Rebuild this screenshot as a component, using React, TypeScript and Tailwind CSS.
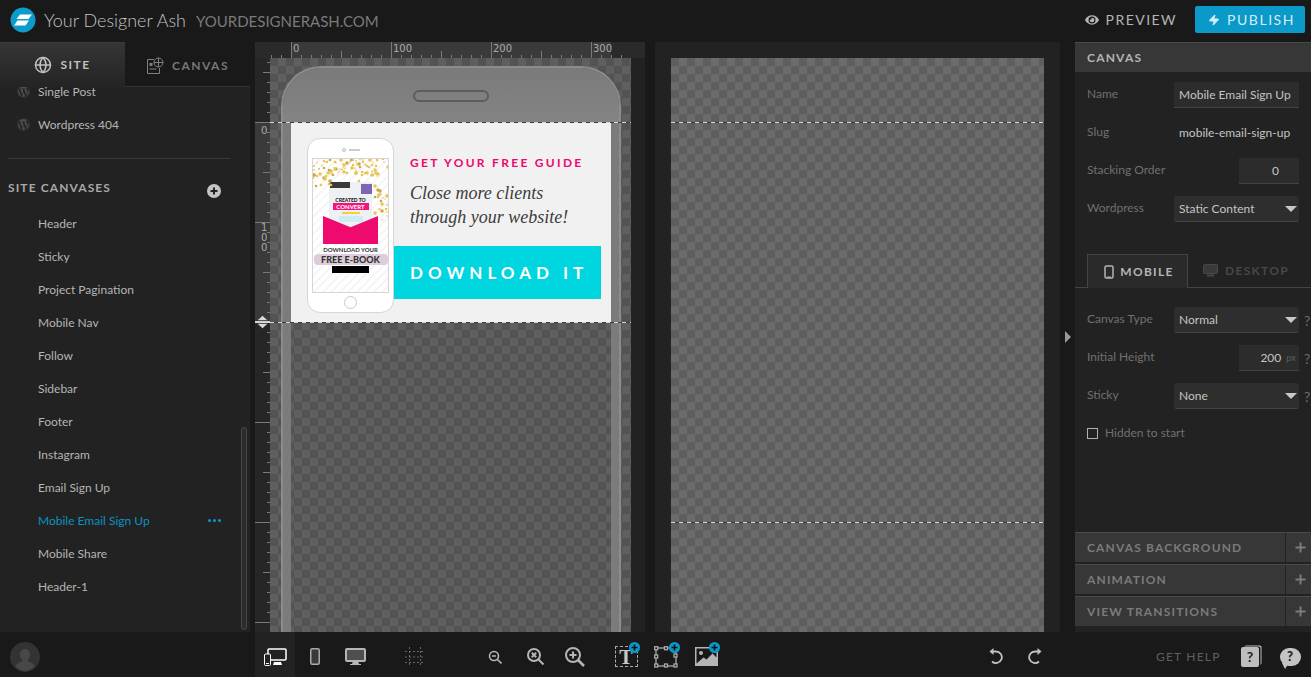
import React from "react";
import { FaWordpress, FaEye } from "react-icons/fa";
import { Globe, Zap } from "lucide-react";

const canvases = ["Header","Sticky","Project Pagination","Mobile Nav","Follow","Sidebar","Footer","Instagram","Email Sign Up","Mobile Email Sign Up","Mobile Share","Header-1"];

const Dashed = ({ className = "" }: { className?: string }) => (
  <div className={"absolute left-0 right-0 h-px bg-[repeating-linear-gradient(90deg,#d8d8d8_0_4px,#3a3a3a_4px_8px)] " + className} />
);

function TopRulerTicks() {
  const t: React.ReactNode[] = [];
  for (let x = 16; x <= 376; x += 10) {
    const v = x - 36;
    const major = v % 100 === 0;
    const mid = v % 50 === 0;
    t.push(<line key={x} x1={x + 0.5} x2={x + 0.5} y1={major ? 0 : mid ? 9 : 13} y2={16} stroke="#7a7a7a" />);
  }
  return <svg width="376" height="16" className="block">{t}</svg>;
}

function LeftRulerTicks() {
  const t: React.ReactNode[] = [];
  for (let y = 4; y < 574; y += 10) {
    const v = y - 64;
    const major = v % 100 === 0 && v >= 0;
    const mid = v % 50 === 0;
    t.push(<line key={y} x1={major ? 0 : mid ? 8 : 12} x2={15} y1={y + 0.5} y2={y + 0.5} stroke="#7a7a7a" />);
  }
  return <svg width="15" height="574" className="block">{t}</svg>;
}

function Confetti() {
  const dots: React.ReactNode[] = [];
  let s = 17;
  for (let i = 0; i < 120; i++) {
    s = (s * 137 + 71) % 1009;
    const x = s % 77;
    s = (s * 137 + 71) % 1009;
    const y = x > 60 ? s % 75 : (s % 28) * (i % 3 === 0 ? 0.55 : 1);
    if (x > 18 && x < 62 && y > 22) continue;
    dots.push(<circle key={i} cx={x} cy={y} r={0.8 + (i % 3) * 0.5} fill={i % 4 === 0 ? "#c9a94a" : "#e9c654"} />);
  }
  return <svg width="77" height="135" className="absolute left-0 top-0">{dots}</svg>;
}

function MiniPhone() {
  return (
    <div className="relative z-10 w-[87px] h-[175px] shrink-0 rounded-[13px] border border-[#d6d6d6] bg-white flex flex-col items-center">
      <div className="h-[19px] flex items-center gap-[3px] pt-[3px]">
        <span className="w-[4px] h-[4px] rounded-full border border-[#bbb]" />
        <span className="w-[11px] h-[2px] bg-[#ccc]" />
      </div>
      <div className="relative w-[77px] h-[135px] border border-[#d5d5d5] bg-[repeating-linear-gradient(135deg,#ffffff_0_4px,#f6f6f6_4px_6px)] overflow-hidden flex flex-col items-center">
        <div className="w-[43px] h-[48px] mt-[23px] bg-[#eef1f4] flex flex-col items-center relative">
          <div className="absolute left-[1px] top-0 w-[20px] h-[6px] bg-[#3a3a3a]" />
          <div className="absolute right-0 top-[2px] w-[11px] h-[10px] bg-[#7f66b5]" />
          <span className="mt-[15px] text-[5px] leading-[6px] font-black text-[#222] whitespace-nowrap">CREATED TO</span>
          <span className="w-[36px] h-[7px] bg-[#f4157a] text-white text-[6px] leading-[7px] font-bold text-center">CONVERT</span>
          <span className="w-[18px] h-[2px] mt-[2px] bg-[#f2d13a]" />
          <span className="w-[24px] h-[6px] mt-[2px] bg-[#cfeaf2]" />
        </div>
        <div className="w-[55px] h-[28px] -mt-[14px] bg-[#ee0a6e] [clip-path:polygon(0_0,50%_40%,100%_0,100%_100%,0_100%)]" />
        <span className="mt-[2px] text-[6px] leading-[8px] font-bold text-[#333] whitespace-nowrap">DOWNLOAD YOUR</span>
        <span className="w-[74px] text-center bg-[#ddccd9] rounded-[4px] text-[9px] leading-[11px] font-black text-[#333] whitespace-nowrap">FREE E-BOOK</span>
        <span className="w-[37px] h-[7px] bg-black mt-[1px]" />
        <Confetti />
      </div>
      <span className="w-[13px] h-[13px] mt-[3px] rounded-full border border-[#c8c8c8]" />
    </div>
  );
}

function Promo() {
  return (
    <div className="relative h-[200px] bg-[#f1f1f2] flex pl-[16px] pt-[16px]">
      <MiniPhone />
      <div className="flex-1 flex flex-col pt-[14px]">
        <div className="pl-[16px] pt-[2px] text-[12px] leading-[18px] font-bold tracking-[2.3px] text-[#f0066f] whitespace-nowrap">GET YOUR FREE GUIDE</div>
        <div className="pl-[16px] mt-[9px] font-['Liberation_Serif'] italic text-[18px] leading-[24px] text-[#3d3d3d] whitespace-nowrap">Close more clients<br />through your website!</div>
        <div className="mt-[17px] mr-[10px] h-[53px] bg-[#00d6df] pl-[16px] flex items-center text-white font-bold text-[17px] tracking-[5px] whitespace-nowrap">DOWNLOAD IT</div>
      </div>
    </div>
  );
}

function Field({ label, children, help }: { label: string; children: React.ReactNode; help?: boolean }) {
  return (
    <div className="flex items-center h-[26px] mb-[12px] pl-[12px]">
      <span className="flex-1 text-[12px] text-[#707070] -mt-[2px]">{label}</span>
      {children}
      <span className="w-[12px] pl-[5px] text-[14px] text-[#6d6d6d]">{help ? "?" : ""}</span>
    </div>
  );
}

const Select = ({ value }: { value: string }) => (
  <div className="w-[125px] h-[26px] rounded-[3px] bg-[#2e2e2e] border-b border-[#444] flex items-center justify-between pl-[5px] pr-[2px] text-[12px] text-[#c4c4c4]">
    <span>{value}</span>
    <span className="w-0 h-0 border-x-[6px] border-x-transparent border-t-[6px] border-t-[#c8c8c8]" />
  </div>
);

function Section({ title }: { title: string }) {
  return (
    <div className="h-[30px] mb-[2px] flex bg-[#373737] border-t border-[#4a4a4a]">
      <div className="w-[210px] pl-[12px] flex items-center text-[12px] font-bold tracking-[1.15px] text-[#7b7b7b]">{title}</div>
      <div className="flex-1 border-l border-[#222] flex items-center justify-center pl-[4px]">
        <svg width="11" height="11" viewBox="0 0 11 11"><path d="M5.5 0.5v10M0.5 5.5h10" stroke="#7b7b7b" strokeWidth="2" /></svg>
      </div>
    </div>
  );
}

const Badge = () => (
  <span className="absolute right-[6px] top-[10px] w-[11px] h-[11px] rounded-full bg-[#0a99c9] flex items-center justify-center">
    <svg width="7" height="7" viewBox="0 0 7 7"><path d="M3.5 0.5v6M0.5 3.5h6" stroke="#111" strokeWidth="1.6" /></svg>
  </span>
);

const Btn = ({ className = "", children }: { className?: string; children: React.ReactNode }) => (
  <div className={"relative w-[40px] h-[45px] shrink-0 pt-[4px] flex items-center justify-center " + className}>{children}</div>
);

const Monitor = ({ c = "#b5b5b5" }: { c?: string }) => (
  <svg width="21" height="18" viewBox="0 0 21 18"><rect x="1" y="1" width="19" height="12" rx="1" fill="none" stroke={c} strokeWidth="2" /><rect x="2" y="2" width="17" height="10" fill={c} opacity="0.35" /><path d="M8 13h5l1 3h2v1H5v-1h2z" fill={c} /></svg>
);

export default function App() {
  return (
    <div className="w-[1311px] h-[677px] overflow-hidden bg-[#191919] flex flex-col font-['Lato',sans-serif]">
      <header className="h-[42px] shrink-0 flex items-center">
        <svg width="26" height="26" viewBox="0 0 26 26" className="ml-[10px] -mt-[3px]">
          <circle cx="13" cy="13" r="12.5" fill="#0d9cc9" />
          <path d="M10 7.500h12l-3.500 4.500H6.500zM7.500 13.500h11.500l-3.500 5H4z" fill="#fff" />
        </svg>
        <span className="ml-[8px] text-[18px] font-light text-[#c2c2c2] -mt-[1px] tracking-[-0.02px]">Your Designer Ash</span>
        <span className="ml-[10px] text-[15px] text-[#7a7a7a] tracking-[0px]">YOURDESIGNERASH.COM</span>
        <div className="ml-auto flex items-center text-[#b5b5b5] -mt-[3px]">
          <FaEye size={14} />
          <span className="ml-[7px] text-[14px] tracking-[1.45px]">PREVIEW</span>
        </div>
        <div className="ml-[18px] mr-[6px] -mt-[3px] w-[110px] h-[27px] rounded-[2px] bg-[#0a99c9] flex items-center pl-[13px] text-[#d5eef6]">
          <Zap size={12} fill="currentColor" />
          <span className="ml-[7px] text-[14px] tracking-[1.55px]">PUBLISH</span>
        </div>
      </header>

      <main className="h-[590px] shrink-0 flex">
        <aside className="relative w-[250px] shrink-0 bg-[#222] flex flex-col overflow-hidden">
          <div className="h-[45px] shrink-0 flex">
            <div className="w-[125px] border-t border-[#3c3c3c] bg-[linear-gradient(#353535,#242424)] flex items-center justify-center gap-[8px] text-[#c0c0c0]">
              <Globe size={18} />
              <span className="text-[12px] font-bold tracking-[1.5px]">SITE</span>
            </div>
            <div className="flex-1 bg-[#191919] border-b border-[#333] pt-[4px] flex items-center justify-center gap-[8px] text-[#777]">
              <svg width="18" height="18" viewBox="0 0 18 18" fill="none" stroke="#808080">
                <path d="M8 2.5H1.5v14h12V11" /><circle cx="12.5" cy="5.5" r="4.5" fill="#191919" /><path d="M8 5.5h9M12.5 1v9" /><rect x="3.5" y="6" width="3" height="3" fill="#808080" stroke="none" /><path d="M3.5 12h7" />
              </svg>
              <span className="text-[12px] font-bold tracking-[1.5px]">CANVAS</span>
            </div>
          </div>
          <div className="flex-1 overflow-hidden">
            <div className="-mt-[12px]">
              {["Single Post", "Wordpress 404"].map((n) => (
                <div key={n} className="h-[33px] flex items-center pl-[17px] text-[12px] text-[#b5b5b5]">
                  <FaWordpress size={13} className="text-[#4e4e4e] mr-[8px]" />
                  <span>{n}</span>
                </div>
              ))}
            </div>
            <div className="mx-[8px] w-[222px] mt-[17px] border-t border-[#383838]" />
            <div className="h-[20px] mt-[19px] flex items-center pl-[8px] pr-[29px] justify-between">
              <span className="text-[12px] font-bold tracking-[1.1px] text-[#a8a8a8]">SITE CANVASES</span>
              <span className="w-[14px] h-[14px] mt-[5px] rounded-full bg-[#c4c4c4] flex items-center justify-center">
                <svg width="8" height="8" viewBox="0 0 8 8"><path d="M4 0.5v7M0.5 4h7" stroke="#222" strokeWidth="2" /></svg>
              </span>
            </div>
            <div className="mt-[9px]">
              {canvases.map((n) => {
                const on = n === "Mobile Email Sign Up";
                return (
                  <div key={n} className={"h-[33px] flex items-center pl-[38px] pr-[29px] justify-between text-[12px] " + (on ? "text-[#0a93c2]" : "text-[#b5b5b5]")}>
                    <span>{n}</span>
                    {on && (
                      <span className="flex gap-[2px]">
                        <i className="w-[3px] h-[3px] rounded-full bg-[#0a99c9]" /><i className="w-[3px] h-[3px] rounded-full bg-[#0a99c9]" /><i className="w-[3px] h-[3px] rounded-full bg-[#0a99c9]" />
                      </span>
                    )}
                  </div>
                );
              })}
            </div>
          </div>
          <div className="absolute left-[241px] top-[385px] w-[6px] h-[203px] rounded-[3px] bg-[#2c2c2c] border border-[#484848]" />
        </aside>

        <section className="ml-[5px] w-[390px] shrink-0 bg-[#222] flex flex-col">
          <div className="relative h-[16px] shrink-0 bg-[#2a2a2a] overflow-hidden">
            <div className="absolute left-[36px] w-[320px] h-full bg-[#3a3a3a]" />
            <div className="absolute left-0 top-0"><TopRulerTicks /></div>
            {[["0", 38], ["100", 138], ["200", 238], ["300", 338]].map(([l, x]) => (
              <span key={l as string} className="absolute top-[0px] text-[10px] leading-[13px] text-[#aaa] font-['DejaVu_Sans']" style={{ left: x as number }}>{l}</span>
            ))}
          </div>
          <div className="flex-1 flex overflow-hidden">
            <div className="relative w-[15px] shrink-0 bg-[#262626]">
              <div className="absolute top-[64px] h-[200px] w-full bg-[#3a3a3a]" />
              <div className="absolute left-0 top-0"><LeftRulerTicks /></div>
              <span className="absolute left-[6px] top-[66px] text-[10px] leading-[13px] text-[#aaa] font-['DejaVu_Sans']">0</span>
              <span className="absolute left-[6px] top-[165px] w-[8px] text-[10px] leading-[10px] text-[#aaa] font-['DejaVu_Sans']">1<br />0<br />0</span>
              <svg width="15" height="14" className="absolute left-0 top-[257px]" viewBox="0 0 15 14">
                <path d="M7.5 0.500l5.500 5h-11zM2 8.500h11l-5.500 5z" fill="#d8d8d8" stroke="#222" strokeWidth="0.5" /><path d="M0 7h15" stroke="#fff" strokeWidth="1.500" />
              </svg>
            </div>
            <div className="relative w-[361px] bg-[#5f5f5f] bg-[repeating-conic-gradient(#5f5f5f_0_25%,#535353_0_50%)] bg-[length:16px_16px] overflow-hidden pl-[11px] pt-[8px]">
              <div className="w-[340px] h-[600px] rounded-t-[40px] border-2 border-b-0 border-[#8c8c8c]">
                <div className="h-[54px] rounded-t-[38px] bg-[linear-gradient(#7a7a7a,#848484)] flex justify-center pt-[22px]">
                  <div className="w-[76px] h-[12px] rounded-[6px] border-2 border-[#5c5c5c]" />
                </div>
                <div className="h-[546px] border-x-[8px] border-[#7b7b7b]">
                  <Promo />
                </div>
              </div>
              <Dashed className="top-[64px]" />
              <Dashed className="top-[264px]" />
            </div>
            <div className="flex-1 bg-[#222]" />
          </div>
        </section>

        <section className="ml-[10px] w-[405px] shrink-0 bg-[#222] pl-[16px] pr-[16px] pt-[16px]">
          <div className="relative h-full bg-[#6b6b6b] bg-[repeating-conic-gradient(#6b6b6b_0_25%,#5e5e5e_0_50%)] bg-[length:16px_16px]">
            <Dashed className="top-[64px]" />
            <Dashed className="top-[464px]" />
          </div>
        </section>

        <div className="w-[15px] shrink-0 flex items-center justify-center">
          <span className="w-0 h-0 border-y-[6px] border-y-transparent border-l-[6px] border-l-[#9a9a9a]" />
        </div>

        <aside className="w-[236px] shrink-0 bg-[#222] flex flex-col">
          <div className="h-[30px] shrink-0 bg-[#373737] border-t border-[#4a4a4a] pl-[12px] flex items-center text-[12px] font-bold tracking-[1.2px] text-[#b5b5b5]">CANVAS</div>
          <div className="pt-[10px]">
            <Field label="Name">
              <div className="w-[125px] h-[26px] bg-[#2c2c2c] border-b border-[#444] pl-[5px] flex items-center text-[12px] text-[#c4c4c4] whitespace-nowrap">Mobile Email Sign Up</div>
            </Field>
            <Field label="Slug">
              <div className="w-[125px] pl-[5px] text-[12px] text-[#c4c4c4] whitespace-nowrap">mobile-email-sign-up</div>
            </Field>
            <Field label="Stacking Order">
              <div className="w-[60px] h-[26px] bg-[#2c2c2c] border-b border-[#444] flex items-center pl-[33px] text-[12px] text-[#c4c4c4]">0</div>
            </Field>
            <Field label="Wordpress"><Select value="Static Content" /></Field>
          </div>
          <div className="mt-[20px] h-[34px] shrink-0 border-b border-[#444] pl-[12px] flex">
            <div className="w-[101px] h-[34px] border border-b-0 border-[#444] bg-[#2a2a2a] pl-[3px] flex items-center justify-center gap-[6px] text-[#b5b5b5]">
              <svg width="10" height="14" viewBox="0 0 10 14"><rect x="1" y="1" width="8" height="12" rx="1.5" fill="none" stroke="#b5b5b5" strokeWidth="1.5" /><path d="M3 12h4" stroke="#b5b5b5" /></svg>
              <span className="text-[12px] font-bold tracking-[1.3px]">MOBILE</span>
            </div>
            <div className="flex items-center ml-[15px] gap-[7px] text-[#484848]">
              <svg width="15" height="13" viewBox="0 0 15 13"><rect x="0.5" y="0.5" width="14" height="9" rx="1" fill="#3a3a3a" stroke="#484848" /><path d="M4 11.5h7" stroke="#484848" strokeWidth="2" /></svg>
              <span className="text-[12px] font-bold tracking-[1.3px]">DESKTOP</span>
            </div>
          </div>
          <div className="pt-[19px]">
            <Field label="Canvas Type" help><Select value="Normal" /></Field>
            <Field label="Initial Height" help>
              <div className="w-[60px] h-[26px] bg-[#2c2c2c] border-b border-[#444] flex items-center justify-end pr-[3px] text-[12px] text-[#c4c4c4]">
                200<span className="ml-[5px] text-[10px] italic text-[#5c5c5c]">px</span>
              </div>
            </Field>
            <Field label="Sticky" help><Select value="None" /></Field>
          </div>
          <div className="pl-[12px] flex items-center gap-[7px] h-[24px] text-[12px] text-[#707070]">
            <span className="w-[11px] h-[11px] border border-[#b0b0b0]" />
            Hidden to start
          </div>
          <div className="mt-auto pb-[4px]">
            <Section title="CANVAS BACKGROUND" />
            <Section title="ANIMATION" />
            <Section title="VIEW TRANSITIONS" />
          </div>
        </aside>
      </main>

      <footer className="h-[45px] shrink-0 flex items-center">
        <div className="w-[255px] shrink-0 pl-[10px] pt-[4px]">
          <svg width="30" height="30" viewBox="0 0 30 30" className="block">
            <circle cx="15" cy="15" r="15" fill="#333" />
            <path d="M15 7c3 0 5 2.3 5 5.5 0 2.3-1 4-2.2 5.2v1.5c2.5 1 5.7 2 6.7 4.8A14.6 14.6 0 0 1 15 29a14.6 14.6 0 0 1-9.500-5c1-2.800 4.200-3.800 6.700-4.800v-1.500C11 16.500 10 14.800 10 12.500 10 9.300 12 7 15 7z" fill="#484848" />
          </svg>
        </div>
        <Btn className="bg-[#222]">
          <svg width="23" height="18" viewBox="0 0 23 18">
            <rect x="4" y="1" width="18" height="11" rx="1" fill="none" stroke="#fff" strokeWidth="1.5" /><path d="M10 14h7l1 3H9z" fill="#fff" /><rect x="0.500" y="6" width="6" height="11.500" rx="1" fill="#222" stroke="#fff" /><path d="M2 15.500h3" stroke="#fff" />
          </svg>
        </Btn>
        <Btn>
          <svg width="10" height="17" viewBox="0 0 10 17"><rect x="0.750" y="0.750" width="8.500" height="15.500" rx="1.500" fill="#3a3a3a" stroke="#aaa" strokeWidth="1.500" /></svg>
        </Btn>
        <Btn><Monitor /></Btn>
        <Btn className="ml-[20px]">
          <svg width="20" height="20" viewBox="0 0 20 20" fill="none" stroke="#666" strokeDasharray="2 2">
            <path d="M4.500 0v20M15.500 0v20M0 4.500h20M0 15.500h20M0 10h20" />
          </svg>
        </Btn>
        <Btn className="ml-[40px]">
          <svg width="14" height="14" viewBox="0 0 14 14" fill="none" stroke="#b5b5b5" strokeWidth="1.600"><circle cx="6" cy="6" r="4.500" /><path d="M9.500 9.500l4 4M4 6h4" /></svg>
        </Btn>
        <Btn>
          <svg width="17" height="17" viewBox="0 0 17 17" fill="none" stroke="#b5b5b5" strokeWidth="2"><circle cx="7" cy="7" r="6" /><path d="M11.500 11.500l5 5M4.800 4.800l4.400 4.400M9.200 4.800l-4.400 4.400" /></svg>
        </Btn>
        <Btn>
          <svg width="20" height="20" viewBox="0 0 20 20" fill="none" stroke="#b5b5b5" strokeWidth="2"><circle cx="8" cy="8" r="7" /><path d="M13 13l6 6" strokeWidth="2.600" /><path d="M8 4.500v7M4.500 8h7" /></svg>
        </Btn>
        <Btn className="ml-[11px]">
          <div className="w-[23px] h-[21px] border border-dashed border-[#aaa] flex items-center justify-center font-['Liberation_Serif'] font-bold text-[20px] leading-[20px] text-[#c8c8c8]">T</div>
          <Badge />
        </Btn>
        <Btn>
          <svg width="24" height="22" viewBox="0 0 24 22" fill="none" stroke="#aaa" strokeWidth="1.300">
            <rect x="2" y="2" width="20" height="18" /><g fill="#191919"><rect x="0.700" y="0.700" width="3" height="3" /><rect x="10.500" y="0.700" width="3" height="3" /><rect x="20" y="8" width="3" height="3" /><rect x="0.700" y="18" width="3" height="3" /><rect x="10.500" y="18" width="3" height="3" /><rect x="20" y="18" width="3" height="3" /><rect x="0.700" y="9" width="3" height="3" /></g>
          </svg>
          <Badge />
        </Btn>
        <Btn>
          <svg width="23" height="19" viewBox="0 0 23 19"><path d="M0 0h23v19H0z" fill="#b5b5b5" /><path d="M1.500 1.500h20v9l-4-4-6 6-3-2-7 6z" fill="#191919" /><circle cx="6" cy="6" r="2" fill="#b5b5b5" /></svg>
          <Badge />
        </Btn>
        <Btn className="ml-[249px]">
          <svg width="15" height="17" viewBox="0 0 15 17" fill="none" stroke="#c0c0c0" strokeWidth="1.800"><path d="M4 3.500h4a5.800 5.800 0 1 1-4 10" /><path d="M5.500 0L1.500 3.500 5.500 7" fill="#c0c0c0" stroke="none" /></svg>
        </Btn>
        <Btn>
          <svg width="15" height="17" viewBox="0 0 15 17" fill="none" stroke="#c0c0c0" strokeWidth="1.800"><path d="M11 3.500H7a5.800 5.800 0 1 0 4 10" /><path d="M9.500 0l4 3.500-4 3.500z" fill="#c0c0c0" stroke="none" /></svg>
        </Btn>
        <span className="ml-[101px] w-[64px] shrink-0 pt-[4px] text-[12px] tracking-[1.2px] text-[#5f5f5f] whitespace-nowrap">GET HELP</span>
        <Btn className="ml-[10px]">
          <div className="w-[18px] h-[20px] rounded-[2px] bg-[#bdbdbd] shadow-[2px_-1px_0_-0.5px_#191919,3px_-2px_0_-0.5px_#bdbdbd] flex items-center justify-center text-[14px] font-bold text-[#222]">?</div>
        </Btn>
        <Btn>
          <div className="relative w-[21px] h-[18px] rounded-full bg-[#c4c4c4] flex items-center justify-center text-[13px] font-black text-[#222]">
            ?
            <span className="absolute left-[2px] bottom-[-3px] w-0 h-0 border-l-[3px] border-l-transparent border-r-[4px] border-r-transparent border-t-[6px] border-t-[#c4c4c4]" />
          </div>
        </Btn>
      </footer>
    </div>
  );
}
